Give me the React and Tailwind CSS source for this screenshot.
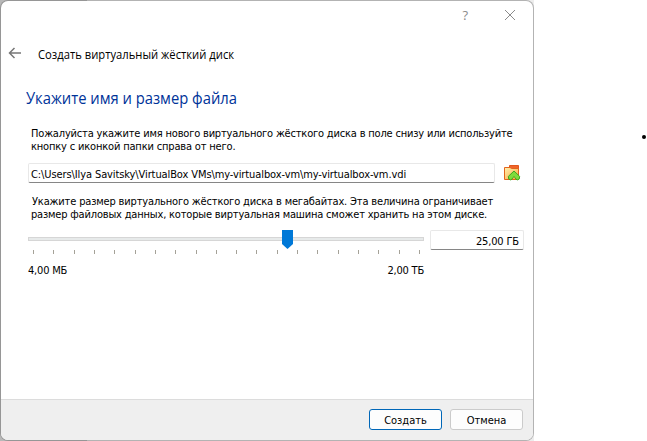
const uiFont = "font-['DejaVu_Sans_Condensed','DejaVu_Sans',sans-serif] [font-stretch:condensed]";

function FolderIcon() {
  return (
    <svg width="17" height="17" viewBox="0 0 17 17" className="block">
      <defs>
        <linearGradient id="folder" x1="0" y1="0" x2="1" y2="1">
          <stop offset="0" stopColor="#fff0b0" />
          <stop offset="1" stopColor="#f9a83a" />
        </linearGradient>
      </defs>
      <path d="M5.5 4V.5H14.5V14H12" fill="#f0642a" stroke="#e2561d" />
      <path d="M.5 2.5H6L7.5 3.5H14.5V14.5H.5Z" fill="url(#folder)" stroke="#e2651d" />
      <path d="M10 6L15.7 11.4Q15.9 15 13.3 14.9Q11.7 14.7 11.4 12.9L10 11.6L8.6 12.9Q8.3 14.7 6.7 14.9Q4.1 15 4.3 11.4Z" fill="#7ddc3c" stroke="#3fa31f" strokeLinejoin="round" />
    </svg>
  );
}

const ticks = Array.from({ length: 20 }, (_, i) => i);

export default function App() {
  return (
    <div className={`relative flex h-[441px] w-[647px] overflow-hidden bg-white text-[11px] leading-[13px] text-black ${uiFont}`}>
      <div className="h-[441px] w-[534px] bg-[linear-gradient(90deg,#b8b8b8_87px,#ededed_87px)]">
        <div className="h-[441px] rounded-[8px] bg-[linear-gradient(90deg,#969696_87px,#b3b3b3_87px)] p-px">
        <div className="flex h-[439px] flex-col overflow-hidden rounded-[7px] bg-white">
          <div className="flex h-[29px] shrink-0 items-center justify-end pr-[17px] text-[#8b8b8b]">
            <span className="mr-[36px] font-['Open_Sans',sans-serif] text-[13px] [font-stretch:normal]">?</span>
            <svg width="12" height="12" viewBox="0 0 12 12" fill="none" stroke="currentColor" className="mt-[-1px]">
              <path d="M1 1L11 11M11 1L1 11" />
            </svg>
          </div>
          <div className="flex h-[48px] shrink-0 items-center pl-[7px] whitespace-nowrap">
            <svg width="14" height="12" viewBox="0 0 14 12" fill="none" stroke="#777" strokeWidth="1.5" className="mb-[2px]">
              <path d="M13 6H1.5M6.5 1L1.5 6L6.5 11" />
            </svg>
            <h1 className="mt-[2px] ml-[16px] origin-left scale-x-[0.935] font-['Open_Sans','Noto_Sans',sans-serif] text-[12px] leading-4 [font-stretch:normal]">Создать виртуальный жёсткий диск</h1>
          </div>
          <h2 className="mt-[10px] ml-[25px] origin-left scale-x-[0.923] font-['Open_Sans','Noto_Sans',sans-serif] text-[16px] leading-[20px] whitespace-nowrap text-[#003399] [font-stretch:normal]">Укажите имя и размер файла</h2>
          <div className="mt-[19px] ml-[30px] flex flex-col items-start whitespace-nowrap">
            <span className="tracking-[-0.185px]">Пожалуйста укажите имя нового виртуального жёсткого диска в поле снизу или используйте</span>
            <span className="tracking-[-0.17px]">кнопку с иконкой папки справа от него.</span>
          </div>
          <div className="mt-[10px] ml-[27px] flex h-[21px] items-start">
            <div className="flex h-[20px] w-[467px] items-center rounded-[2px] border border-[#e8e8e8] border-b-[#868686] pt-[3px] pl-[2px] whitespace-nowrap">
              <span className="tracking-[-0.1px]">C:\Users\Ilya Savitsky\VirtualBox VMs\my-virtualbox-vm\my-virtualbox-vm.vdi</span>
            </div>
            <div className="mt-[2px] ml-[9px]"><FolderIcon /></div>
          </div>
          <div className="mt-[11px] ml-[30px] flex flex-col items-start whitespace-nowrap">
            <span className="ml-[1px] tracking-[-0.16px]">Укажите размер виртуального жёсткого диска в мегабайтах. Эта величина ограничивает</span>
            <span className="tracking-[-0.18px]">размер файловых данных, которые виртуальная машина сможет хранить на этом диске.</span>
          </div>
          <div className="mt-[9px] ml-[27px] flex">
            <div className="w-[396px]">
              <div className="relative mt-[7px] h-[4px] border border-[#d6d6d6] bg-[#e7eaea]">
                <svg width="11" height="19" viewBox="0 0 11 19" className="absolute -top-[8px] left-[253px]">
                  <path d="M0 0H11V14L5.5 19L0 14Z" fill="#0078d7" />
                </svg>
              </div>
              <div className="mt-[9px] mr-[4px] ml-[5px] flex justify-between">
                {ticks.map((i) => <i key={i} className="h-[4px] w-px bg-[#a5a298]" />)}
              </div>
              <div className="mt-[10px] flex justify-between tracking-[-0.2px] whitespace-nowrap">
                <span>4,00 МБ</span>
                <span>2,00 ТБ</span>
              </div>
            </div>
            <div className="ml-[6px] flex h-[20px] w-[94px] items-center justify-end rounded-[2px] border border-[#e8e8e8] border-b-[#868686] pt-[2px] pr-[4px] tracking-[-0.15px] whitespace-nowrap">
              <span>25,00 ГБ</span>
            </div>
          </div>
          <div className="mt-auto flex h-[41px] shrink-0 justify-end gap-[8px] border-t border-[#dcdcdc] bg-[#efefef] pt-[9px] pr-[10px]">
            <button className="h-[21px] w-[73px] rounded-[3px] border border-[#0067b8] bg-[#fdfdfd] pt-px">Создать</button>
            <button className="h-[21px] w-[73px] rounded-[3px] border border-[#cbcbcb] bg-[#fdfdfd] pt-px">Отмена</button>
          </div>
        </div>
        </div>
      </div>
      <i className="mt-[135px] ml-[108px] size-[4px] rounded-full bg-black" />
    </div>
  );
}
